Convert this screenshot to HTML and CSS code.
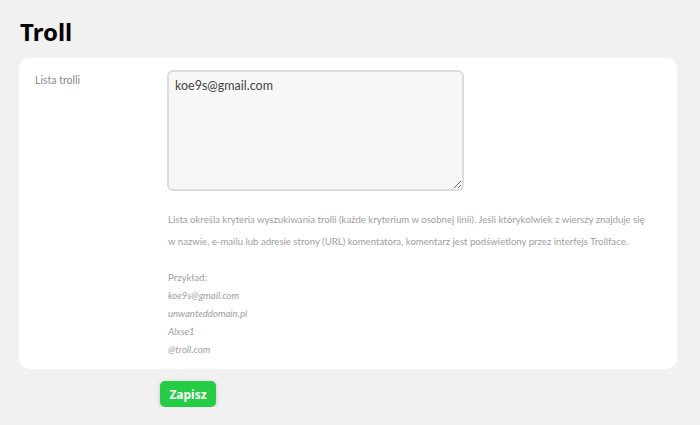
FILE: index.html
```html
<!DOCTYPE html>
<html lang="pl">
<head>
<meta charset="utf-8">
<title>Troll</title>
<link rel="stylesheet" href="styles.css">
</head>
<body>
<h1 class="title">Troll</h1>
<div class="card">
  <div class="label">Lista trolli</div>
  <div class="field">
    <textarea class="input">koe9s@gmail.com</textarea>
    <p class="desc">Lista określa kryteria wyszukiwania trolli (każde kryterium w osobnej linii). Jeśli którykolwiek z wierszy znajduje się<br>w nazwie, e-mailu lub adresie strony (URL) komentatora, komentarz jest podświetlony przez interfejs Trollface.</p>
    <div class="examples">
      <div>Przykład:</div>
      <div class="ex">koe9s@gmail.com</div>
      <div class="ex">unwanteddomain.pl</div>
      <div class="ex">Alxse1</div>
      <div class="ex">@troll.com</div>
    </div>
  </div>
</div>
<div class="actions">
  <button class="save">Zapisz</button>
</div>
</body>
</html>
```
FILE: styles.css
```css
html, body { margin: 0; padding: 0; }
body {
  background: #f1f1f1;
  font-family: Lato, "Noto Sans", sans-serif;
  padding: 16px 23px 0 19px;
}
.title {
  margin: 0 0 0 1px;
  font-family: "Noto Sans", sans-serif;
  font-size: 24px;
  line-height: 32px;
  font-weight: 700;
  color: #000;
  height: 42px;
}
.card {
  background: #fff;
  border-radius: 11px;
  display: grid;
  grid-template-columns: 148px 1fr;
  padding: 12px 0 10px 0;
}
.label {
  padding-left: 16px;
  padding-top: 2px;
  font-size: 10.5px;
  line-height: 16px;
  color: #8a8a8a;
}
.field { display: flex; flex-direction: column; align-items: flex-start; }
.input {
  box-sizing: border-box;
  width: 297px;
  height: 121px;
  margin: 0;
  background: #f7f7f7;
  border: 2px solid #dcdcdc;
  border-radius: 6px;
  padding: 5px 6px;
  font-family: Lato, "Noto Sans", sans-serif;
  font-size: 12.5px;
  line-height: 18px;
  color: #444;
  resize: vertical;
}
.desc {
  margin: 18px 0 0 1px;
  font-size: 9.6px;
  line-height: 22px;
  color: #9e9e9e;
  white-space: nowrap;
}
.examples {
  margin: 16px 0 0 1px;
  font-size: 9.6px;
  line-height: 18px;
  color: #9e9e9e;
}
.ex { font-style: italic; }
.actions { padding: 12px 0 0 141px; }
.save {
  background: #26cc45;
  color: #fff;
  border: none;
  border-radius: 5px;
  font-family: "Noto Sans", sans-serif;
  font-weight: 700;
  font-size: 12px;
  width: 56px;
  height: 26px;
  padding: 0;
  box-shadow: 0 1px 4px rgba(0,0,0,0.2);
}
```
